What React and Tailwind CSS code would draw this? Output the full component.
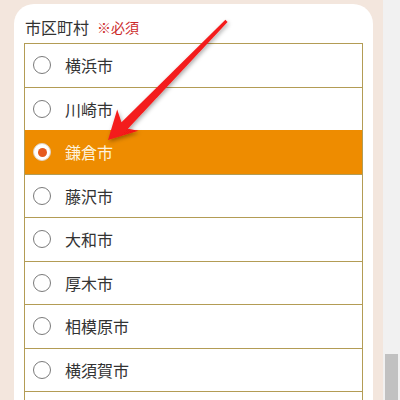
import React from "react";

const items = ["横浜市", "川崎市", "鎌倉市", "藤沢市", "大和市", "厚木市", "相模原市", "横須賀市", ""];

function Radio({ checked }) {
  if (checked) {
    return (
      <span className="flex h-[18px] w-[18px] items-center justify-center rounded-full bg-white border border-[#e0d0c0]">
        <span className="h-[9px] w-[9px] rounded-full bg-[#e65a1e]" />
      </span>
    );
  }
  return <span className="block h-[18px] w-[18px] rounded-full border border-[#7a7a7a] bg-white" />;
}

export default function App() {
  return (
    <div
      className="relative flex h-[400px] w-[400px] overflow-hidden"
      style={{ fontFamily: '"Noto Sans CJK JP", "Noto Sans", sans-serif' }}
    >
      <div className="flex-1 bg-[#f3e6dd] pl-[14px] pr-[10px] pt-[4px]">
        <div className="h-[460px] rounded-t-[20px] bg-white pl-[10px] pr-[10px] pt-[11px]">
          <div className="mb-[4px] flex h-[24px] items-center gap-[8px] pl-[1px]">
            <span className="text-[16px] leading-none text-[#333]">市区町村</span>
            <span className="text-[14px] leading-none text-[#cc2a2a]">※必須</span>
          </div>
          <div className="border-x border-b border-[#b39c55]">
            {items.map((name, i) => {
              const sel = i === 2;
              return (
                <div
                  key={i}
                  className={
                    sel
                      ? "flex h-[43.5px] items-center border-t border-[#ee8c00] bg-[#ee8c00] pl-[8px]"
                      : "flex h-[43.5px] items-center border-t border-[#b39c55] bg-white pl-[8px]"
                  }
                >
                  <Radio checked={sel} />
                  <span
                    className={
                      sel
                        ? "ml-[14px] text-[16px] text-[#fdf2dc]"
                        : "ml-[14px] text-[16px] text-[#333]"
                    }
                  >
                    {name}
                  </span>
                </div>
              );
            })}
          </div>
        </div>
      </div>
      <div className="flex w-[17px] flex-col justify-end bg-[#f1f1f1] px-[2px]">
        <div className="h-[46px] w-full bg-[#c1c1c1]" />
      </div>
      <svg
        className="pointer-events-none absolute left-0 top-0"
        width="400"
        height="400"
        viewBox="0 0 400 400"
      >
        <defs>
          <filter id="sh" x="-20%" y="-20%" width="140%" height="140%">
            <feDropShadow dx="1" dy="2" stdDeviation="2" floodColor="#000" floodOpacity="0.35" />
          </filter>
          <linearGradient id="rg" x1="0" y1="0" x2="1" y2="1">
            <stop offset="0" stopColor="#ff2a2a" />
            <stop offset="1" stopColor="#e80c0c" />
          </linearGradient>
        </defs>
        <polygon
          filter="url(#sh)"
          fill="url(#rg)"
          points="227.6,21.9 127.9,128.7 138.5,130.7 108,140 117.2,109.6 121.5,122.2 225.4,19.8"
        />
      </svg>
    </div>
  );
}
